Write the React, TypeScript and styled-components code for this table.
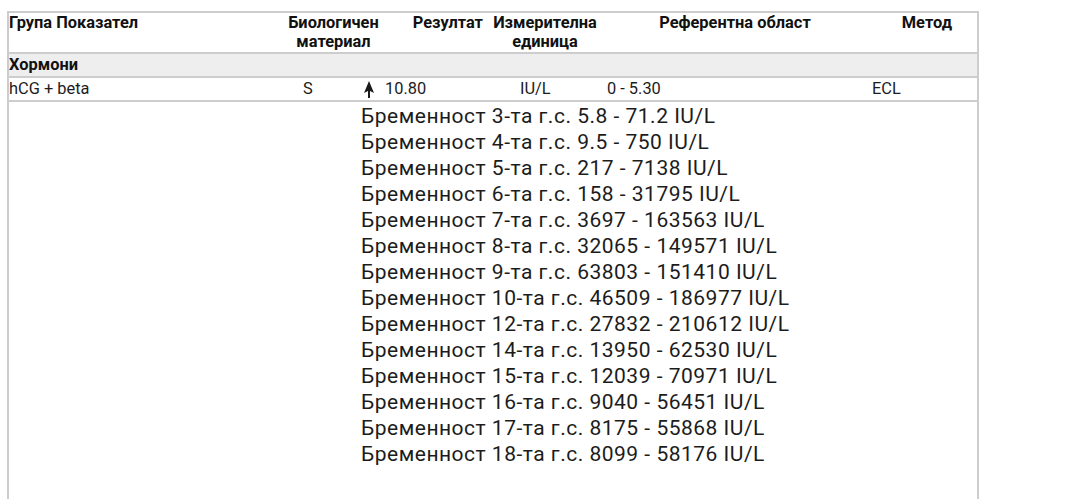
import styled, { createGlobalStyle } from "styled-components"

const ranges = [
  "Бременност 3-та г.с. 5.8 - 71.2 IU/L",
  "Бременност 4-та г.с. 9.5 - 750 IU/L",
  "Бременност 5-та г.с. 217 - 7138 IU/L",
  "Бременност 6-та г.с. 158 - 31795 IU/L",
  "Бременност 7-та г.с. 3697 - 163563 IU/L",
  "Бременност 8-та г.с. 32065 - 149571 IU/L",
  "Бременност 9-та г.с. 63803 - 151410 IU/L",
  "Бременност 10-та г.с. 46509 - 186977 IU/L",
  "Бременност 12-та г.с. 27832 - 210612 IU/L",
  "Бременност 14-та г.с. 13950 - 62530 IU/L",
  "Бременност 15-та г.с. 12039 - 70971 IU/L",
  "Бременност 16-та г.с. 9040 - 56451 IU/L",
  "Бременност 17-та г.с. 8175 - 55868 IU/L",
  "Бременност 18-та г.с. 8099 - 58176 IU/L"
]

// filled arrow head with a short stem, marks a value above range
const UpArrow = () => (
  <svg width="10" height="17" viewBox="0 0 10 17">
    <path d="M5 0 L10 12 L5 9.5 L0 12 Z" fill="#1a1a1a" />
    <rect x="4" y="8" width="2" height="9" fill="#1a1a1a" />
  </svg>
)

const App = () => {
  return (
    <>
      <GlobalStyle />
      <Page>
        <Report>
          <HeaderRow>
            <HeadCell $align="left">Група Показател</HeadCell>
            <HeadCell $align="center">
              Биологичен
              <br />
              материал
            </HeadCell>
            <HeadCell $align="right">Резултат</HeadCell>
            <HeadCell $align="center">
              Измерителна
              <br />
              единица
            </HeadCell>
            <HeadCell $align="center">Референтна област</HeadCell>
            <HeadCell $align="right" $padRight={25}>
              Метод
            </HeadCell>
          </HeaderRow>
          <SectionRow>Хормони</SectionRow>
          <DataRow>
            <DataCell>hCG + beta</DataCell>
            <DataCell>S</DataCell>
            <ResultCell>
              <UpArrow />
              10.80
            </ResultCell>
            <DataCell>IU/L</DataCell>
            <DataCell>0 - 5.30</DataCell>
            <DataCell>ECL</DataCell>
          </DataRow>
          <NoteRow>
            <NoteList>
              {ranges.map((r) => (
                <li key={r}>{r}</li>
              ))}
            </NoteList>
          </NoteRow>
        </Report>
      </Page>
    </>
  )
}

const GlobalStyle = createGlobalStyle`
  html, body {
    margin: 0;
    padding: 0;
    background: #fff;
    overflow: hidden;
  }
  body {
    font-family: Roboto, "Noto Sans", sans-serif;
    color: #1c1c1c;
  }
`

const Page = styled.main`
  width: 1074px;
  height: 499px;
  padding: 11px 0 0 7px;
  box-sizing: border-box;
`

const Report = styled.section`
  width: 972px;
  border: 2px solid #cdcdcd;
  border-bottom: none;
  box-sizing: border-box;
  display: flex;
  flex-direction: column;
`

const HeaderRow = styled.header`
  display: grid;
  grid-template-columns: 261px 127px 86px 124px 256px 1fr;
  height: 41px;
  box-sizing: border-box;
  border-bottom: 2px solid #cdcdcd;
`

const HeadCell = styled.div<{
  $align: "left" | "center" | "right"
  $padRight?: number
}>`
  font-size: 16.4px;
  font-weight: 700;
  line-height: 19px;
  color: #111;
  text-align: ${({ $align }) => $align};
  padding-right: ${({ $padRight }) => $padRight ?? 0}px;
  white-space: nowrap;
`

const SectionRow = styled.div`
  height: 24px;
  box-sizing: border-box;
  line-height: 22px;
  background: #eeeeee;
  font-size: 16.4px;
  font-weight: 700;
  color: #111;
  border-bottom: 2px solid #cdcdcd;
`

const DataRow = styled.div`
  display: grid;
  grid-template-columns: 294px 61px 156px 87px 265px 1fr;
  height: 24px;
  box-sizing: border-box;
  align-items: center;
  border-bottom: 2px solid #cdcdcd;
`

const DataCell = styled.div`
  font-size: 16.4px;
  line-height: 20px;
  color: #1c1c1c;
  white-space: nowrap;
`

const ResultCell = styled.div`
  display: flex;
  align-items: center;
  gap: 11px;
  font-size: 16.4px;
  line-height: 20px;
  color: #1c1c1c;
  svg {
    margin-top: 1px;
  }
`

const NoteRow = styled.div`
  padding: 1px 0 60px 352px;
`

const NoteList = styled.ul`
  list-style: none;
  margin: 0;
  padding: 0;
  font-size: 21px;
  line-height: 26px;
  letter-spacing: 0.5px;
  color: #1c1c1c;
  white-space: nowrap;
`

export default App
